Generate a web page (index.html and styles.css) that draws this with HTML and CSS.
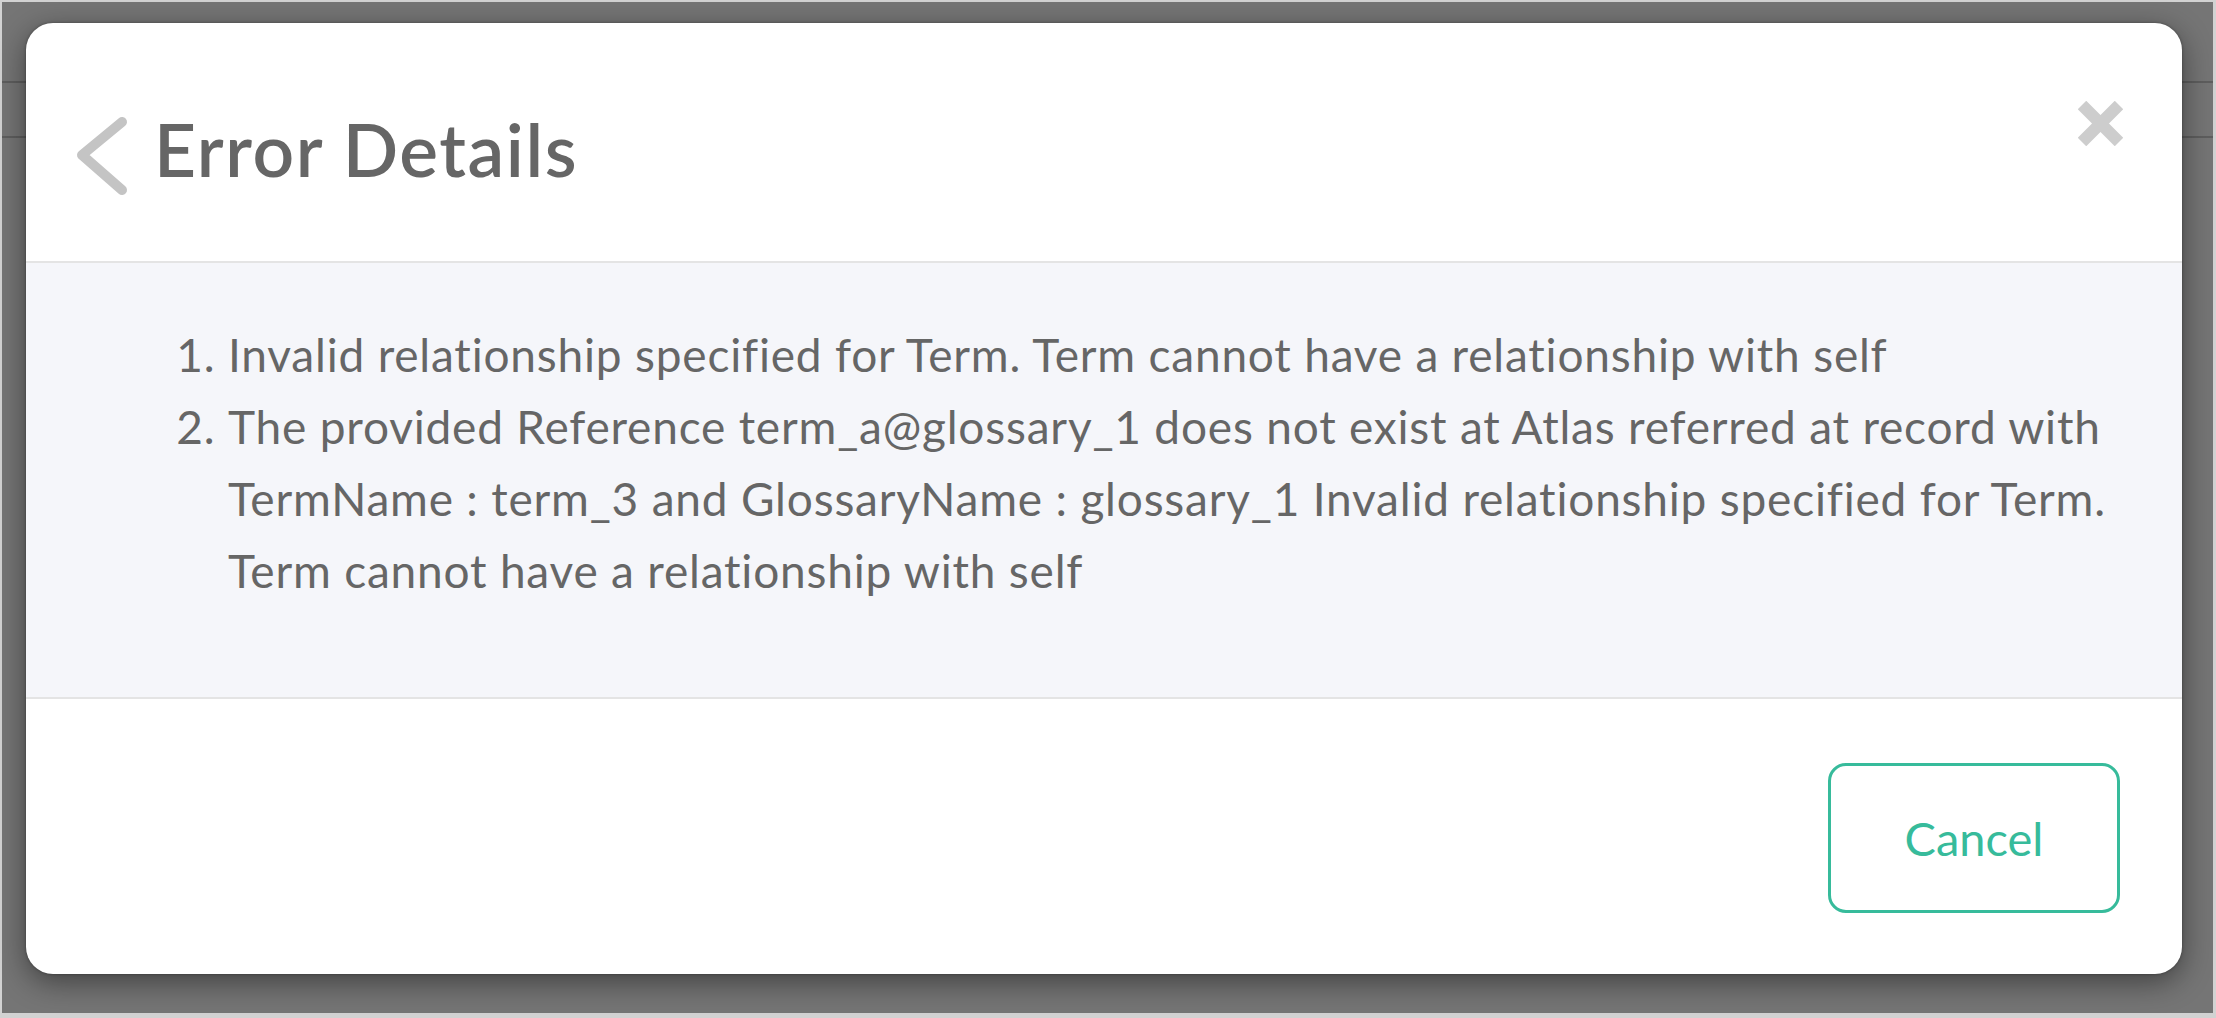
FILE: index.html
```html
<!DOCTYPE html>
<html lang="en">
<head>
<meta charset="utf-8">
<title>Error Details</title>
<link rel="stylesheet" href="styles.css">
</head>
<body>
<div class="screen">
  <div class="modal">
    <header class="modal-header">
      <button class="back" aria-label="Back">
        <svg width="56" height="84" viewBox="0 0 56 84"><polyline points="48,8 8,41 48,76" fill="none" stroke="#c4c4c4" stroke-width="10" stroke-linecap="round" stroke-linejoin="round"/></svg>
      </button>
      <h1 class="title">Error Details</h1>
      <button class="close" aria-label="Close">
        <svg width="45" height="45" viewBox="0 0 45 45"><path d="M4 4 L41 41 M41 4 L4 41" stroke="#cdcdcd" stroke-width="12" fill="none"/></svg>
      </button>
    </header>
    <div class="modal-body">
      <ol class="errors">
        <li>Invalid relationship specified for Term. Term cannot have a relationship with self</li>
        <li>The provided Reference term_a@glossary_1 does not exist at Atlas referred at record with TermName : term_3 and GlossaryName : glossary_1 Invalid relationship specified for Term. Term cannot have a relationship with self</li>
      </ol>
    </div>
    <footer class="modal-footer">
      <button class="btn-cancel">Cancel</button>
    </footer>
  </div>
</div>
</body>
</html>
```
FILE: styles.css
```css
html, body {
  margin: 0;
  padding: 0;
}
body {
  width: 2216px;
  height: 1018px;
  overflow: hidden;
  font-family: Lato, "Noto Sans", sans-serif;
}
.screen {
  box-sizing: border-box;
  width: 2216px;
  height: 1018px;
  border-style: solid;
  border-color: #d2d2d2;
  border-width: 2px 3px 5px 2px;
  padding: 21px 31px 0 24px;
  background:
    linear-gradient(to bottom,
      transparent 79px, #5e5e5e 79px, #5e5e5e 81px, transparent 81px,
      transparent 134px, #5e5e5e 134px, #5e5e5e 136px, transparent 136px),
    #757575;
}
.modal {
  width: 2156px;
  height: 951px;
  background: #fff;
  border-radius: 27px;
  overflow: hidden;
  display: flex;
  flex-direction: column;
  box-shadow: 0 8px 30px rgba(0, 0, 0, 0.45), 0 0 3px rgba(0, 0, 0, 0.35);
}
.modal-header {
  box-sizing: border-box;
  height: 240px;
  flex: none;
  display: flex;
  align-items: center;
  padding: 28px 59px 0 48px;
  border-bottom: 2px solid #e4e4e4;
}
.back, .close {
  border: 0;
  background: none;
  padding: 0;
  margin: 0;
  display: block;
  line-height: 0;
}
.back svg, .close svg {
  display: block;
}
.title {
  margin: 0 0 12px 24px;
  font-size: 73px;
  font-weight: 600;
  letter-spacing: 1.6px;
  color: #666;
  line-height: 1.2;
}
.close {
  margin-left: auto;
  align-self: flex-start;
  margin-top: 50px;
}
.modal-body {
  box-sizing: border-box;
  height: 436px;
  flex: none;
  background: #f5f6fa;
  border-bottom: 2px solid #e4e4e4;
  padding: 56px 40px 0 60px;
}
.errors {
  margin: 0;
  padding-left: 142px;
  font-size: 46px;
  letter-spacing: 0.8px;
  line-height: 72px;
  color: #666;
}
.modal-footer {
  flex: 1;
  display: flex;
  justify-content: flex-end;
  align-items: flex-start;
  padding: 64px 62px 0 0;
}
.btn-cancel {
  box-sizing: border-box;
  width: 292px;
  height: 150px;
  border: 3px solid #37bb9b;
  border-radius: 18px;
  background: #fff;
  color: #37bb9b;
  font-family: Lato, "Noto Sans", sans-serif;
  font-size: 47px;
  padding: 0;
}
```
